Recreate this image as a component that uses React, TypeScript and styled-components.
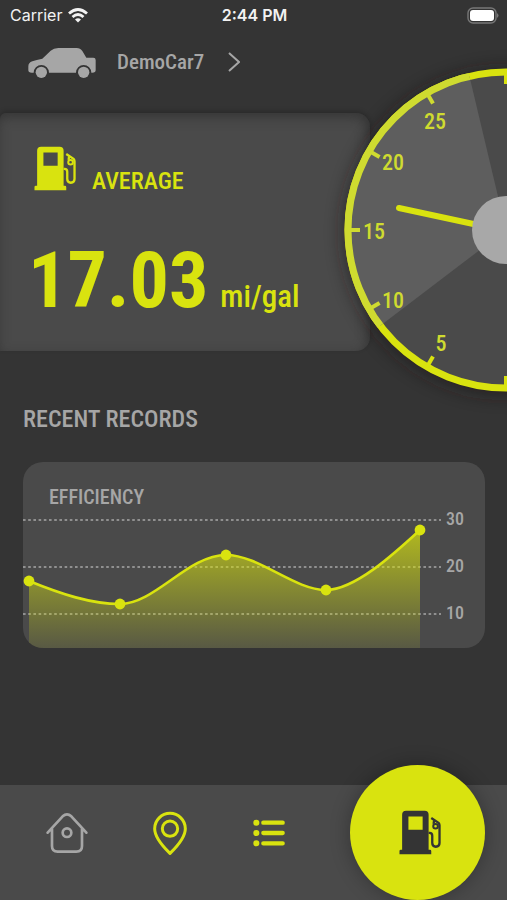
import React from "react";
import styled, { createGlobalStyle } from "styled-components";

const lime = "#d9e30f";
const grey = "#a6a6a6";
const panel = "#4a4a4a";
const condensed = `"Roboto Condensed", "Liberation Sans Narrow", "Roboto", sans-serif`;

const GlobalStyle = createGlobalStyle`
  * { box-sizing: border-box; }
  body { margin: 0; background: #343434; }
  button { border: 0; padding: 0; background: none; color: inherit; font: inherit; cursor: pointer; }
  h1, h2, h3, p { margin: 0; }
  svg { display: block; }
`;

const Page = styled.div`
  min-height: 100vh;
  display: flex;
  flex-direction: column;
  overflow: hidden;
  background: #343434;
  color: ${grey};
  font-family: ${condensed};
`;

const StatusBar = styled.div`
  display: grid;
  grid-template-columns: 1fr auto 1fr;
  align-items: center;
  height: 30px;
  padding: 0 8px 0 10px;
  color: #f2f2f2;
  font-family: Inter, sans-serif;
  font-size: 16px;
`;

const Carrier = styled.span`
  display: flex;
  align-items: center;
  gap: 6px;
`;

const Clock = styled.time`
  font-weight: 600;
`;

const Battery = styled.svg`
  justify-self: end;
`;

const CarButton = styled.button`
  display: flex;
  align-items: center;
  align-self: flex-start;
  height: 64px;
  margin-left: 28px;
  color: ${grey};
`;

const CarName = styled.span`
  margin: 0 24px 0 21px;
  font-size: 21px;
  line-height: 28px;
  font-weight: 500;
`;

const Hero = styled.section`
  position: relative;
  margin-top: 19px;
`;

const AverageCard = styled.div`
  width: 73%;
  height: 238px;
  padding: 33px 0 0 28px;
  border-radius: 6px 14px 14px 0;
  background: ${panel};
  box-shadow: 0 -2px 5px rgba(0, 0, 0, 0.2), inset -2px 4px 12px rgba(40, 40, 40, 0.6);
  color: ${lime};
`;

const AverageTitle = styled.h1`
  display: flex;
  align-items: flex-end;
  gap: 16px;
  padding-left: 6px;
  font-size: 24px;
  line-height: 20px;
  font-weight: 500;
`;

const Reading = styled.p`
  display: flex;
  align-items: baseline;
  gap: 12px;
  margin-top: 42px;
  line-height: 96px;
`;

const Amount = styled.strong`
  font-size: 78px;
  font-weight: 700;
`;

const Unit = styled.span`
  font-size: 31px;
  font-weight: 500;
`;

const GaugeDrawing = styled.svg`
  position: absolute;
  top: -73px;
  right: 0;
`;

const Records = styled.section`
  padding: 52px 22px 24px 23px;
`;

const RecordsTitle = styled.h2`
  font-size: 24px;
  line-height: 32px;
  font-weight: 500;
`;

const ChartCard = styled.article`
  margin-top: 27px;
  padding-top: 22px;
  border-radius: 20px;
  overflow: hidden;
  background: ${panel};
`;

const ChartTitle = styled.h3`
  padding-left: 26px;
  font-size: 20px;
  line-height: 26px;
  font-weight: 500;
`;

const ChartDrawing = styled.svg`
  width: 100%;
  height: auto;
  overflow: visible;
`;

const TabBar = styled.nav`
  display: flex;
  align-items: center;
  justify-content: space-between;
  height: 115px;
  margin-top: auto;
  padding: 0 22px 20px 46px;
  background: ${panel};
`;

const Tab = styled.button<{ $active?: boolean }>`
  color: ${(p) => (p.$active ? grey : lime)};
`;

const AddFuel = styled.button`
  display: grid;
  place-items: center;
  flex: none;
  width: 135px;
  height: 135px;
  padding: 0 0 0 6px;
  border-radius: 50%;
  background: ${lime};
  color: #343434;
  box-shadow: 0 0 20px rgba(0, 0, 0, 0.3);
`;

function FuelIcon() {
  return (
    <svg width="42" height="45" viewBox="102 138 126 136" fill="none" aria-hidden="true">
      <path
        fill="currentColor"
        fillRule="evenodd"
        d="M111 258V152Q111 140 123 140H179Q191 140 191 152V258H195Q199 258 199 262V272H103V262Q103 258 107 258ZM130 158V198H173V158Z"
      />
      <path
        d="M191 207H194Q202 207 202 216V238Q202 249 213 249Q224 249 224 238V184Q224 180 221 177L199 162M208 167L206 180"
        stroke="currentColor"
        strokeWidth="7"
      />
      <circle cx="212" cy="187" r="7" stroke="currentColor" strokeWidth="6" />
    </svg>
  );
}

function CarIcon() {
  return (
    <svg width="68" height="32" viewBox="83 138 204 96" fill="currentColor" aria-hidden="true">
      <path d="M84 211V199Q84 188 96 184Q108 179 126 176L151 152Q160 144 174 144H229Q240 144 246 153L258 173H279Q286 173 286 180V211Q286 218 276 218H273A23 23 0 0 0 227 218H146A23 23 0 0 0 100 218H94Q84 218 84 211Z" />
      <circle cx="123" cy="217" r="17" />
      <circle cx="250" cy="217" r="17" />
    </svg>
  );
}

const ticks = [0, 30, 60, 90, 120, 150, 180];
const dialLabels = [
  { text: "25", x: 435, y: 129 },
  { text: "20", x: 393, y: 170 },
  { text: "15", x: 374, y: 239 },
  { text: "10", x: 393, y: 308 },
  { text: "5", x: 441, y: 351 },
];

function Gauge() {
  return (
    <GaugeDrawing width="200" height="380" viewBox="307 40 200 380" role="img" aria-label="Efficiency dial">
      <defs>
        <filter id="soft" x="-20%" y="-20%" width="140%" height="140%">
          <feGaussianBlur stdDeviation="9" />
        </filter>
        <clipPath id="sector">
          <path d="M506 230L467 66H330V364Z" />
        </clipPath>
      </defs>
      <circle cx="506" cy="232" r="163" fill="#1c1616" opacity="0.6" filter="url(#soft)" />
      <circle cx="506" cy="230" r="158" fill={panel} stroke={lime} strokeWidth="7" />
      <g clipPath="url(#sector)">
        <circle cx="506" cy="230" r="158" fill="#5e5e5e" stroke="#cfdb30" strokeWidth="7" />
      </g>
      {ticks.map((angle) => (
        <path
          key={angle}
          d="M506 387V376"
          stroke={angle > 40 && angle < 165 ? "#cfdb30" : lime}
          strokeWidth="4"
          transform={`rotate(${angle} 506 230)`}
        />
      ))}
      <g fill="#cfdb30" fontFamily={condensed} fontSize="22" fontWeight="500" textAnchor="middle">
        {dialLabels.map((l) => (
          <text key={l.text} x={l.x} y={l.y}>{l.text}</text>
        ))}
      </g>
      <path d="M399 208L506 231" stroke={lime} strokeWidth="6" strokeLinecap="round" />
      <circle cx="506" cy="230" r="34" fill="#a8a8a8" />
    </GaugeDrawing>
  );
}

const points = [[6, 71], [97, 94], [203, 45], [303, 80], [397, 20]];
const curve = "M6 71C38 84 68 94 97 94C132 94 165 45 203 45C236 45 271 80 303 80C332 80 372 43 397 20";
const gridLines = [{ value: 30, y: 10 }, { value: 20, y: 57 }, { value: 10, y: 104 }];

function EfficiencyChart() {
  return (
    <ChartDrawing viewBox="0 0 462 138" role="img" aria-label="Efficiency of recent records">
      <defs>
        <linearGradient id="area" x1="0" y1="20" x2="0" y2="138" gradientUnits="userSpaceOnUse">
          <stop offset="0" stopColor={lime} stopOpacity="0.72" />
          <stop offset="1" stopColor={lime} stopOpacity="0.1" />
        </linearGradient>
      </defs>
      {gridLines.map((g) => (
        <g key={g.value}>
          <path d={`M0 ${g.y}H418`} stroke="#a8a8a8" strokeWidth="1.6" strokeDasharray="2.6 2.6" />
          <text x="441" y={g.y + 5} textAnchor="end" fill={grey} fontFamily={condensed} fontSize="18" fontWeight="500">
            {g.value}
          </text>
        </g>
      ))}
      <path d={`${curve}V138H6Z`} fill="url(#area)" />
      <path d={curve} fill="none" stroke={lime} strokeWidth="2.6" />
      {points.map(([x, y]) => (
        <circle key={x} cx={x} cy={y} r="5.4" fill={lime} />
      ))}
    </ChartDrawing>
  );
}

export default function App() {
  return (
    <Page>
      <GlobalStyle />
      <StatusBar>
        <Carrier>
          Carrier
          <svg width="20" height="15" viewBox="0 0 20 15" fill="none" stroke="currentColor" strokeWidth="2.8" aria-label="Wi-Fi">
            <path d="M1 5.5Q10 -2.5 19 5.5M4.5 9Q10 4 15.500 9" />
            <path d="M7 11.500Q10 9 13 11.500L10 14.500Z" fill="currentColor" stroke="none" />
          </svg>
        </Carrier>
        <Clock>2:44 PM</Clock>
        <Battery width="33" height="17" viewBox="0 0 33 17" aria-label="Battery full">
          <rect x="2" y="1" width="28" height="15" rx="5" fill="none" stroke="#777" strokeWidth="1.4" />
          <rect x="4" y="3" width="24" height="11" rx="3" fill="#fff" />
          <path d="M31 6Q34 8.500 31 11Z" fill="#777" />
        </Battery>
      </StatusBar>
      <CarButton>
        <CarIcon />
        <CarName>DemoCar7</CarName>
        <svg width="12" height="20" viewBox="0 0 12 20" fill="none" stroke="currentColor" strokeWidth="2" aria-hidden="true">
          <path d="M1 1L11 10L1 19" />
        </svg>
      </CarButton>
      <Hero>
        <AverageCard>
          <AverageTitle>
            <FuelIcon />
            AVERAGE
          </AverageTitle>
          <Reading>
            <Amount>17.03</Amount>
            <Unit>mi/gal</Unit>
          </Reading>
        </AverageCard>
        <Gauge />
      </Hero>
      <Records>
        <RecordsTitle>RECENT RECORDS</RecordsTitle>
        <ChartCard>
          <ChartTitle>EFFICIENCY</ChartTitle>
          <EfficiencyChart />
        </ChartCard>
      </Records>
      <TabBar>
        <Tab $active aria-label="Home">
          <svg width="42" height="42" viewBox="137 125 126 126" fill="none" stroke="currentColor" strokeWidth="8" strokeLinecap="round" strokeLinejoin="round">
            <path d="M142 187L187 138Q200 126 213 138L258 187M155 176V227Q155 244 172 244H228Q245 244 245 227V176" />
            <circle cx="200" cy="187" r="13" />
          </svg>
        </Tab>
        <Tab aria-label="Stations">
          <svg width="34" height="44" viewBox="462 122 102 132" fill="none" stroke="currentColor" strokeWidth="9" strokeLinejoin="round">
            <path d="M513 249C500 236 467 205 467 175A46 46 0 0 1 559 175C559 205 526 236 513 249Z" />
            <circle cx="513" cy="175" r="23" />
          </svg>
        </Tab>
        <Tab aria-label="Records">
          <svg width="32" height="28" viewBox="758 147 96 84" fill="none" stroke="currentColor" strokeWidth="13" strokeLinecap="round">
            <path d="M789 158H847M789 189H847M789 220H847" />
            <path d="M768 158H768.1M768 189H768.1M768 220H768.1" strokeWidth="18" />
          </svg>
        </Tab>
        <AddFuel aria-label="Add fuel record">
          <FuelIcon />
        </AddFuel>
      </TabBar>
    </Page>
  );
}
